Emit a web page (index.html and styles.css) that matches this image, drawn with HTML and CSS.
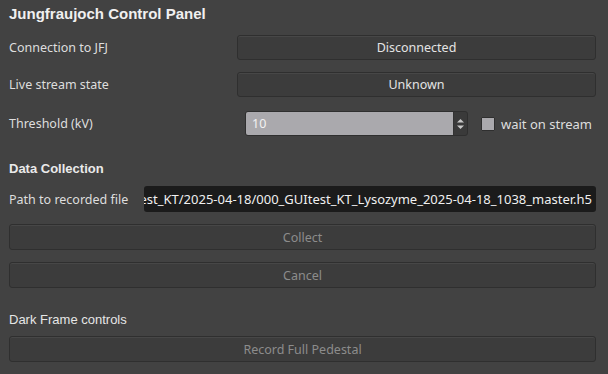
FILE: index.html
```html
<!DOCTYPE html>
<html lang="en">
<head>
  <meta charset="UTF-8">
  <title>Jungfraujoch Control Panel</title>
  <link rel="stylesheet" href="styles.css">
</head>
<body>
  <main class="panel">
    <h1 class="title">Jungfraujoch Control Panel</h1>

    <!-- Status rows -->
    <div class="form">
      <div class="row">
        <label class="label">Connection to JFJ</label>
        <button class="btn">Disconnected</button>
      </div>
      <div class="row">
        <label class="label">Live stream state</label>
        <button class="btn">Unknown</button>
      </div>
      <div class="row row-threshold">
        <label class="label">Threshold (kV)</label>
        <div class="spin">
          <div class="spin-field">10</div>
          <div class="spin-arrows">
            <svg width="9" height="14" viewBox="0 0 9 14">
              <path d="M1 5.5 L4.5 2 L8 5.5 Z" fill="#c9c9c9"/>
              <path d="M1 8.5 L4.5 12 L8 8.5 Z" fill="#c9c9c9"/>
            </svg>
          </div>
        </div>
        <label class="check"><span class="check-box"></span>wait on stream</label>
      </div>
    </div>

    <h2 class="section">Data Collection</h2>
    <div class="row row-path">
      <label class="label label-path">Path to recorded file</label>
      <div class="path-field"><span>est_KT/2025-04-18/000_GUItest_KT_Lysozyme_2025-04-18_1038_master.h5</span></div>
    </div>
    <button class="btn btn-wide" disabled>Collect</button>
    <button class="btn btn-wide btn-cancel" disabled>Cancel</button>

    <h3 class="subsection">Dark Frame controls</h3>
    <button class="btn btn-wide" disabled>Record Full Pedestal</button>
  </main>
</body>
</html>
```

FILE: styles.css
```css
/* Reset & base */
* { margin: 0; padding: 0; box-sizing: border-box; }
body { background: #424242; color: #dedede; font-family: 'Noto Sans', 'DejaVu Sans', sans-serif; font-size: 12.5px; width: 608px; height: 374px; overflow: hidden; }

.panel { padding: 4px 12px 0 9px; display: flex; flex-direction: column; }

.title { font-family: 'Liberation Sans', Arial, sans-serif; font-size: 15px; font-weight: bold; color: #f0f0f0; height: 20px; line-height: 20px; margin-bottom: 11px; }

/* Form rows */
.form { display: flex; flex-direction: column; gap: 12px; }
.row { display: flex; align-items: center; height: 25px; }
.label { width: 228px; flex: none; }

.btn { flex: 1; height: 25px; background: #3c3c3c; border: 1px solid #2f2f2f; border-radius: 3px; color: #e4e4e4; font-family: 'Noto Sans', 'DejaVu Sans', sans-serif; font-size: 12.5px; box-shadow: inset 0 1px 0 #474747; }
.btn:disabled { color: #8c8c8c; }
.btn-wide { width: 100%; height: 26px; flex: none; }

/* Spin box */
.row-threshold { margin-top: 2px; }
.spin { display: flex; margin-left: 8px; width: 223px; height: 25px; border: 1px solid #2f2f2f; border-radius: 3px; background: #3a3a3a; overflow: hidden; }
.spin-field { flex: 1; background: #aaa9ad; color: #f2f2f2; padding-left: 6px; line-height: 23px; }
.spin-arrows { width: 14px; display: flex; align-items: center; justify-content: center; border-left: 1px solid #333; }

.check { display: flex; align-items: center; gap: 6px; margin-left: 13px; font-size: 13px; }
.check-box { width: 14px; height: 14px; background: #aaa9ad; border: 1px solid #2f2f2f; border-radius: 1px; }

/* Data collection */
.section { font-family: 'Liberation Sans', Arial, sans-serif; font-size: 13px; font-weight: bold; color: #eaeaea; margin-top: 25px; height: 16px; line-height: 16px; }
.row-path { height: 26px; margin-top: 9px; }
.label-path { width: 135px; }
.path-field { flex: 1; height: 26px; background: #1b1b1b; border-radius: 3px; display: flex; justify-content: flex-end; overflow: hidden; white-space: nowrap; color: #f0f0f0; font-size: 13px; line-height: 26px; padding-right: 4px; }

.row-path + .btn { margin-top: 12px; }
.btn-cancel { margin-top: 12px; }

.subsection { font-family: 'Liberation Sans', Arial, sans-serif; font-size: 13px; font-weight: normal; color: #e6e6e6; margin-top: 24px; height: 16px; line-height: 16px; margin-bottom: 8px; }
```
